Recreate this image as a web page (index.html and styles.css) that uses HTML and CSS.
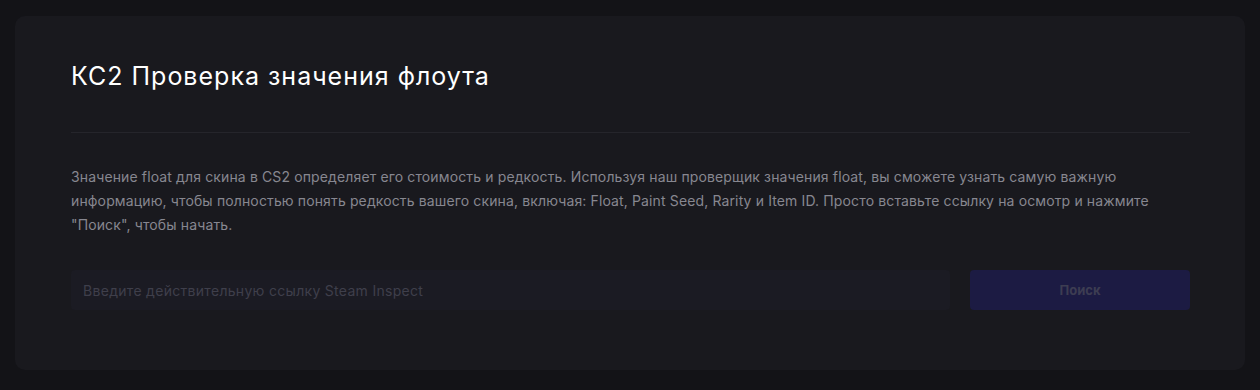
FILE: index.html
```html
<!DOCTYPE html>
<html lang="ru">
<head>
    <meta charset="UTF-8">
    <meta name="viewport" content="width=device-width, initial-scale=1.0">
    <title>КС2 Проверка значения флоута</title>
    <link rel="stylesheet" href="styles.css">
</head>
<body>
    <div class="checker-card">
        <h1 class="checker-title">КС2 Проверка значения флоута</h1>
        <div class="divider"></div>
        <p class="checker-text">Значение float для скина в CS2 определяет его стоимость и редкость. Используя наш проверщик значения float, вы сможете узнать самую важную информацию, чтобы полностью понять редкость вашего скина, включая: Float, Paint Seed, Rarity и Item ID. Просто вставьте ссылку на осмотр и нажмите "Поиск", чтобы начать.</p>
        <div class="search-row">
            <input type="text" class="search-input" placeholder="Введите действительную ссылку Steam Inspect">
            <button class="search-button" disabled>Поиск</button>
        </div>
    </div>
</body>
</html>
```

FILE: styles.css
```css
* {
    box-sizing: border-box;
}
body {
    font-family: Inter, 'Noto Sans', sans-serif;
    background: #131317;
    color: #fff;
    margin: 0;
    padding: 16px 15px 20px;
}
.checker-card {
    background: #19191e;
    border-radius: 10px;
    padding: 44px 55px 60px 56px;
}
.checker-title {
    margin: 0;
    font-size: 25px;
    line-height: 32px;
    font-weight: 400;
    letter-spacing: 1px;
    color: #fff;
}
.divider {
    height: 1px;
    background: #25252b;
    margin: 40px 0 32px;
}
.checker-text {
    margin: 0;
    font-size: 14px;
    line-height: 24px;
    letter-spacing: 0.13px;
    color: #878790;
}
.search-row {
    display: flex;
    gap: 20px;
    margin-top: 33px;
}
.search-input {
    flex: 1;
    height: 40px;
    padding: 0 12px;
    background: #1b1b23;
    border: none;
    border-radius: 4px;
    color: #fff;
    font-family: inherit;
    font-size: 14px;
    letter-spacing: 0.3px;
    outline: none;
}
.search-input::placeholder {
    color: #3f3f4b;
}
.search-button {
    width: 220px;
    height: 40px;
    background: #1c1b43;
    color: #3d3d52;
    border: none;
    border-radius: 4px;
    font-family: inherit;
    font-size: 13px;
    font-weight: 700;
}
```
